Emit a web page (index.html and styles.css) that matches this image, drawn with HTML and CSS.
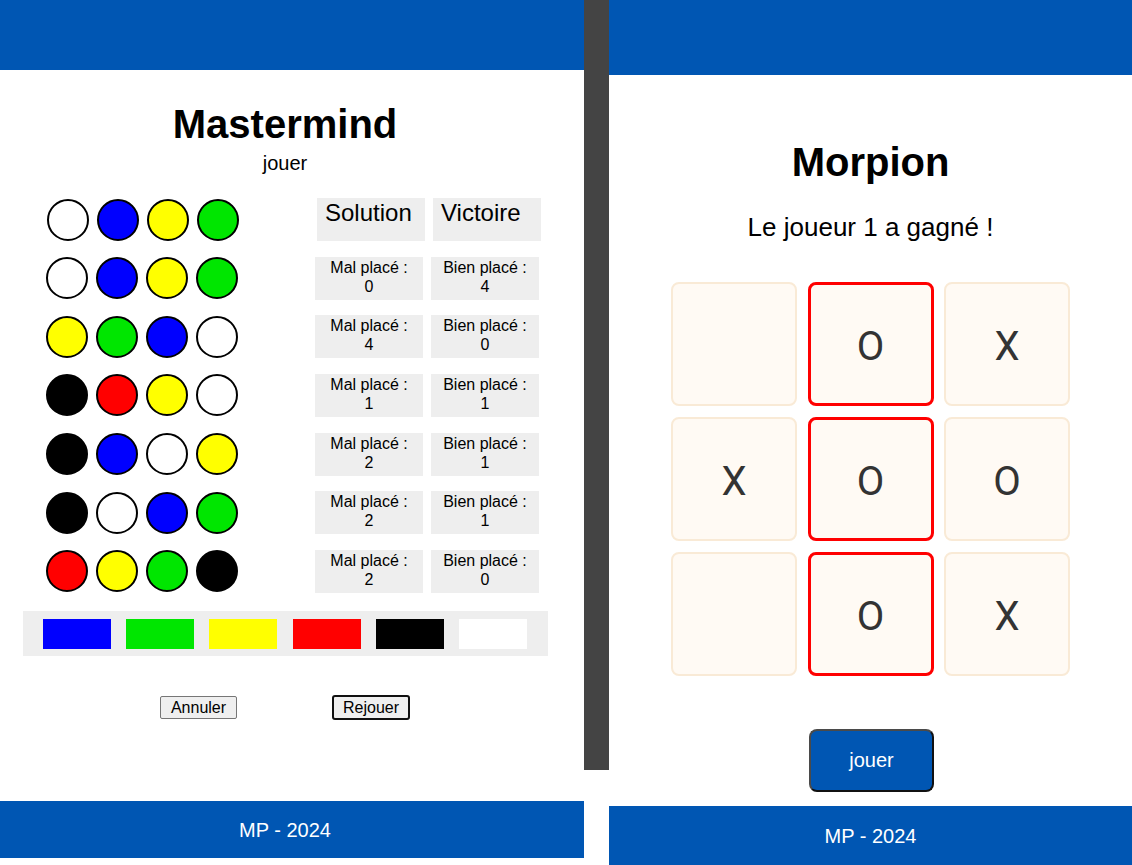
FILE: index.html
```html
<!DOCTYPE html>
<html lang="fr">
<head>
<meta charset="utf-8">
<title>Mastermind &amp; Morpion</title>
<link rel="stylesheet" href="styles.css">
</head>
<body>
<div class="page">
  <section class="panel panel-left">
    <header class="bar bar-top-left"></header>
    <main class="mm-main">
      <h1 class="title">Mastermind</h1>
      <div class="subtitle">jouer</div>
      <div class="board">
        <div class="row row-solution">
          <div class="pegs">
            <span class="peg c-white"></span><span class="peg c-blue"></span><span class="peg c-yellow"></span><span class="peg c-green"></span>
          </div>
          <div class="boxes">
            <div class="head">Solution</div>
            <div class="head">Victoire</div>
          </div>
        </div>
        <div class="row">
          <div class="pegs">
            <span class="peg c-white"></span><span class="peg c-blue"></span><span class="peg c-yellow"></span><span class="peg c-green"></span>
          </div>
          <div class="boxes">
            <div class="fb">Mal placé :<br>0</div>
            <div class="fb">Bien placé :<br>4</div>
          </div>
        </div>
        <div class="row">
          <div class="pegs">
            <span class="peg c-yellow"></span><span class="peg c-green"></span><span class="peg c-blue"></span><span class="peg c-white"></span>
          </div>
          <div class="boxes">
            <div class="fb">Mal placé :<br>4</div>
            <div class="fb">Bien placé :<br>0</div>
          </div>
        </div>
        <div class="row">
          <div class="pegs">
            <span class="peg c-black"></span><span class="peg c-red"></span><span class="peg c-yellow"></span><span class="peg c-white"></span>
          </div>
          <div class="boxes">
            <div class="fb">Mal placé :<br>1</div>
            <div class="fb">Bien placé :<br>1</div>
          </div>
        </div>
        <div class="row">
          <div class="pegs">
            <span class="peg c-black"></span><span class="peg c-blue"></span><span class="peg c-white"></span><span class="peg c-yellow"></span>
          </div>
          <div class="boxes">
            <div class="fb">Mal placé :<br>2</div>
            <div class="fb">Bien placé :<br>1</div>
          </div>
        </div>
        <div class="row">
          <div class="pegs">
            <span class="peg c-black"></span><span class="peg c-white"></span><span class="peg c-blue"></span><span class="peg c-green"></span>
          </div>
          <div class="boxes">
            <div class="fb">Mal placé :<br>2</div>
            <div class="fb">Bien placé :<br>1</div>
          </div>
        </div>
        <div class="row">
          <div class="pegs">
            <span class="peg c-red"></span><span class="peg c-yellow"></span><span class="peg c-green"></span><span class="peg c-black"></span>
          </div>
          <div class="boxes">
            <div class="fb">Mal placé :<br>2</div>
            <div class="fb">Bien placé :<br>0</div>
          </div>
        </div>
      </div>
      <div class="palette">
        <span class="swatch c-blue"></span>
        <span class="swatch c-green"></span>
        <span class="swatch c-yellow"></span>
        <span class="swatch c-red"></span>
        <span class="swatch c-black"></span>
        <span class="swatch c-white"></span>
      </div>
      <div class="actions">
        <button class="btn">Annuler</button>
        <button class="btn btn-focus">Rejouer</button>
      </div>
    </main>
    <footer class="bar footer-left"><span class="footer-text">MP - 2024</span></footer>
  </section>

  <div class="divider"></div>

  <section class="panel panel-right">
    <header class="bar bar-top-right"></header>
    <main class="tt-main">
      <h1 class="title tt-title">Morpion</h1>
      <div class="status">Le joueur 1 a gagné !</div>
      <div class="grid">
        <div class="cell"></div>
        <div class="cell win">O</div>
        <div class="cell">X</div>
        <div class="cell">X</div>
        <div class="cell win">O</div>
        <div class="cell">O</div>
        <div class="cell"></div>
        <div class="cell win">O</div>
        <div class="cell">X</div>
      </div>
      <button class="play">jouer</button>
    </main>
    <footer class="bar footer-right"><span class="footer-text">MP - 2024</span></footer>
  </section>
</div>
</body>
</html>
```

FILE: styles.css
```css
* { box-sizing: border-box; }

html, body {
  margin: 0;
  padding: 0;
  background: #ffffff;
  font-family: "Liberation Sans", Arial, sans-serif;
  color: #000;
}

.page {
  display: flex;
  align-items: flex-start;
  width: 1132px;
  height: 865px;
  overflow: hidden;
}

.panel {
  display: flex;
  flex-direction: column;
  background: #fff;
}

.panel-left {
  width: 584px;
  height: 858px;
  flex: none;
}

.panel-right {
  flex: 1;
  height: 865px;
}

.divider {
  width: 25px;
  height: 770px;
  flex: none;
  background: #444444;
}

.bar {
  background: #0056b3;
  flex: none;
}

.bar-top-left { height: 70px; }
.bar-top-right { height: 75px; }

.footer-left {
  margin-top: auto;
  height: 57px;
  display: flex;
  align-items: center;
  justify-content: center;
  padding-right: 14px;
  padding-top: 2px;
}

.footer-right {
  margin-top: auto;
  height: 59px;
  display: flex;
  align-items: center;
  justify-content: center;
  padding-top: 2px;
}

.footer-text {
  color: #fff;
  font-size: 20px;
  line-height: 23px;
}

/* ---------- Mastermind ---------- */
.mm-main {
  display: flex;
  flex-direction: column;
  align-items: center;
  padding-right: 14px;
}

.title {
  margin: 31px 0 0;
  font-size: 40px;
  line-height: 46px;
  font-weight: 700;
  text-align: center;
}

.subtitle {
  margin-top: 5px;
  font-size: 20px;
  line-height: 23px;
}

.board {
  margin-top: 23px;
  width: 570px;
  display: flex;
  flex-direction: column;
  gap: 15.67px;
}

.row {
  display: flex;
  align-items: center;
  height: 43px;
  padding-left: 46px;
}

.row-solution { padding-left: 47px; }

.pegs {
  display: flex;
  gap: 8px;
}

.peg {
  width: 42px;
  height: 42px;
  border-radius: 50%;
  border: 2px solid #000;
  display: block;
}

.boxes {
  display: flex;
  gap: 8px;
  margin-left: 77px;
}

.row-solution .boxes { margin-left: 78px; }

.head {
  width: 108px;
  height: 43px;
  background: #eeeeee;
  font-size: 24px;
  line-height: 28px;
  padding: 1px 0 0 8px;
}

.fb {
  width: 108px;
  height: 43px;
  background: #eeeeee;
  font-size: 16px;
  line-height: 19px;
  padding-top: 1px;
  text-align: center;
}

.c-white { background: #ffffff; }
.c-blue { background: #0000ff; }
.c-yellow { background: #ffff00; }
.c-green { background: #00e600; }
.c-red { background: #ff0000; }
.c-black { background: #000000; }

.palette {
  margin-top: 18px;
  width: 525px;
  height: 45px;
  background: #eeeeee;
  padding: 8px 20px 0 20px;
  display: flex;
  gap: 15.2px;
  margin-left: 1px;
}

.swatch {
  width: 68px;
  height: 30px;
  display: block;
}

.actions {
  margin-top: 39px;
  display: flex;
  gap: 95px;
  align-items: center;
}

.btn {
  font-family: "Liberation Sans", Arial, sans-serif;
  font-size: 16px;
  line-height: 19px;
  padding: 1px 10px;
  background: #efefef;
  border: 1px solid #767676;
  border-radius: 2px;
  color: #000;
}

.btn-focus {
  border: 2px solid #101010;
  border-radius: 3px;
  padding: 1px 9px;
}

/* ---------- Morpion ---------- */
.tt-main {
  display: flex;
  flex-direction: column;
  align-items: center;
}

.tt-title {
  margin-top: 64px;
}

.status {
  margin-top: 27px;
  font-size: 26px;
  line-height: 30px;
}

.grid {
  margin-top: 40px;
  display: grid;
  grid-template-columns: repeat(3, 126px);
  grid-auto-rows: 124px;
  column-gap: 10.5px;
  row-gap: 11px;
}

.cell {
  background: #fffaf4;
  border: 2px solid #f9ead6;
  border-radius: 8px;
  display: flex;
  align-items: center;
  justify-content: center;
  padding-top: 4px;
  font-family: Roboto, "Liberation Sans", sans-serif;
  font-size: 40px;
  color: #333333;
}

.cell.win {
  border: 3px solid #ff0000;
}

.play {
  margin-top: 53px;
  margin-left: 2px;
  width: 125px;
  height: 63px;
  background: #0056b3;
  color: #ffffff;
  font-family: "Liberation Sans", Arial, sans-serif;
  font-size: 20px;
  border: 2px solid #4a4a4a;
  border-right-color: #111;
  border-bottom-color: #111;
  border-radius: 8px;
}
```
